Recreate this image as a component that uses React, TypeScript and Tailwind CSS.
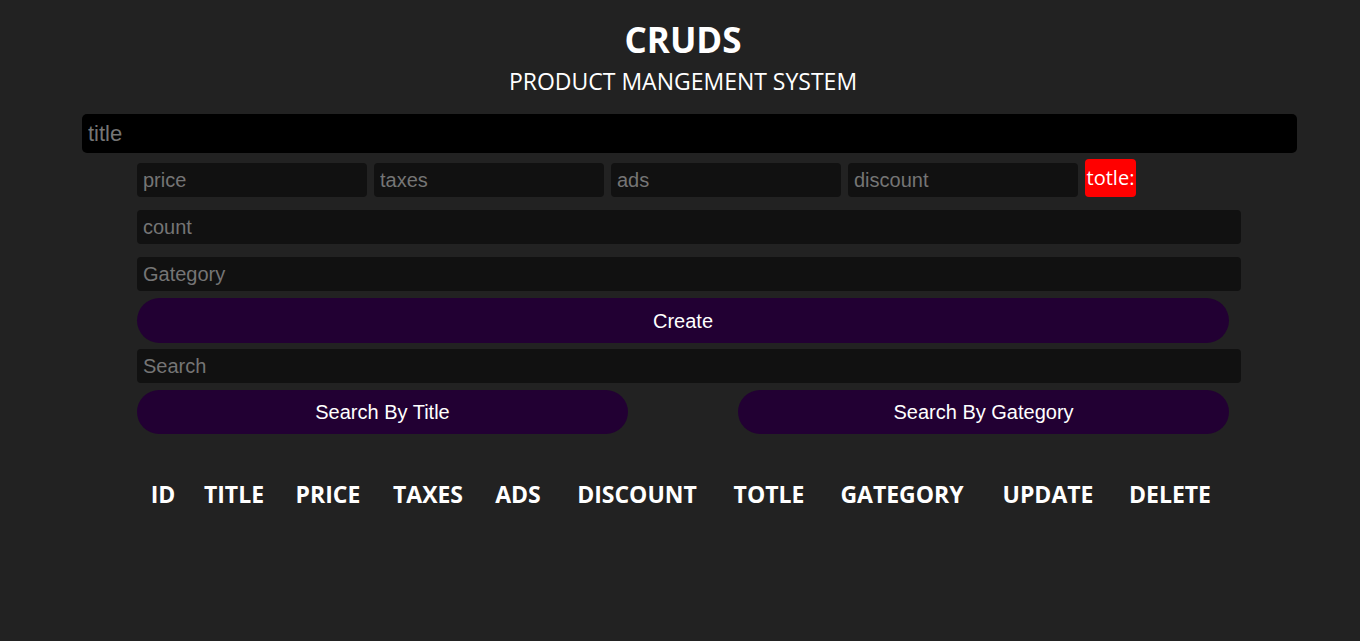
import React from "react";

const inputCls =
  "h-[34px] rounded-[4px] bg-[#111111] px-[6px] text-[20px] text-white placeholder:text-[#757575] outline-none border-0";

export default function App() {
  const headers: [string, number][] = [
    ["ID", 54],
    ["TITLE", 88],
    ["PRICE", 100],
    ["TAXES", 100],
    ["ADS", 80],
    ["DISCOUNT", 158],
    ["TOTLE", 106],
    ["GATEGORY", 160],
    ["UPDATE", 132],
    ["DELETE", 112],
  ];
  return (
    <div
      className="min-h-[641px] w-full bg-[#222222] text-white"
      style={{ fontFamily: "'Liberation Sans', Arial, sans-serif" }}
    >
      <div className="flex flex-col items-center pt-[20px] pl-[6px]" style={{ fontFamily: "'Open Sans', sans-serif" }}>
        <h1 className="text-[35px] font-bold leading-[40px]">CRUDS</h1>
        <p className="mt-[1px] text-[23px] leading-[40px]">PRODUCT MANGEMENT SYSTEM</p>
      </div>
      <div className="ml-[82px] mt-[13px] w-[1215px]">
        <input
          autoFocus
          placeholder="title"
          className="h-[39px] w-full rounded-[5px] bg-black px-[6px] text-[22px] text-white placeholder:text-[#757575] outline-none caret-[#9ca3af]"
        />
      </div>
      <div className="ml-[137px] w-[1104px]">
        <div className="mt-[6px] flex items-end gap-[7px]">
          <input placeholder="price" className={inputCls + " w-[230px]"} />
          <input placeholder="taxes" className={inputCls + " w-[230px]"} />
          <input placeholder="ads" className={inputCls + " w-[230px]"} />
          <input placeholder="discount" className={inputCls + " w-[230px]"} />
          <div className="flex h-[38px] w-[51px] items-center justify-center rounded-[4px] bg-[#ff0000] text-[20px]" style={{ fontFamily: "'Open Sans', sans-serif" }}>
            totle:
          </div>
        </div>
        <input placeholder="count" className={inputCls + " mt-[13px] block w-full"} />
        <input placeholder="Gategory" className={inputCls + " mt-[13px] block w-full"} />
        <button className="mt-[7px] block h-[45px] w-[1092px] rounded-full bg-[#220033] text-[20px] text-white">
          Create
        </button>
        <input placeholder="Search" className={inputCls + " mt-[6px] block w-full"} />
        <div className="mt-[7px] flex w-[1092px] justify-between">
          <button className="h-[44px] w-[491px] rounded-full bg-[#220033] text-[20px] text-white">
            Search By Title
          </button>
          <button className="h-[44px] w-[491px] rounded-full bg-[#220033] text-[20px] text-white">
            Search By Gategory
          </button>
        </div>
      </div>
      <table className="ml-[136px] mt-[40px] border-collapse" style={{ fontFamily: "'Open Sans', sans-serif" }}>
        <thead>
          <tr>
            {headers.map(([h, w]) => (
              <th key={h} style={{ width: w }} className="p-0 text-center text-[23px] font-bold leading-[40px]">
                {h}
              </th>
            ))}
          </tr>
        </thead>
      </table>
    </div>
  );
}
